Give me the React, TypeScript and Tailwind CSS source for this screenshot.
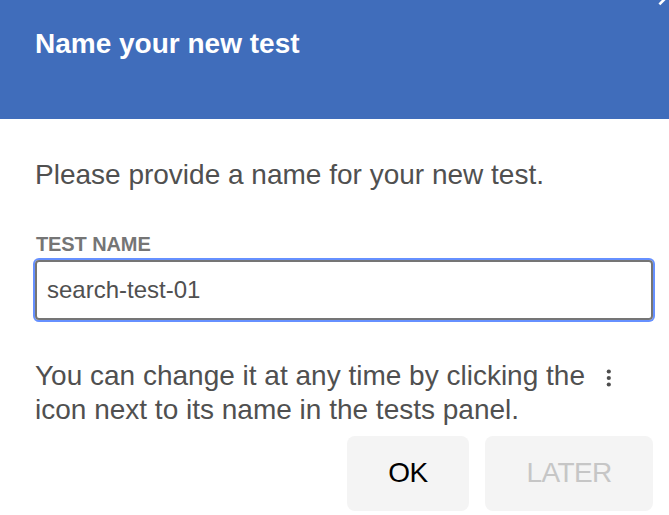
import React from 'react';

const MoreIcon = () => (
  <svg className="ml-[14px] inline-block h-[20px] w-[20px] align-[-3px]" viewBox="0 0 20 20" fill="#4d4d4d">
    <circle cx="9.8" cy="3.5" r="2.1" />
    <circle cx="9.8" cy="10" r="2.1" />
    <circle cx="9.8" cy="16.5" r="2.1" />
  </svg>
);

const App = () => {
  return (
    <div className="relative h-[515px] w-[669px] overflow-hidden bg-white font-['Liberation_Sans',Arial,sans-serif] text-[#505050]">
      <header className="h-[119px] bg-[#406dbb] px-[35px] pt-[27px]">
        <h1 className="text-[28px] leading-[34px] font-bold text-white">Name your new test</h1>
      </header>
      {/* Close icon, cut off by the corner of the dialog */}
      <svg className="absolute top-0 right-0 h-[6px] w-[12px]" viewBox="0 0 12 6" fill="none" stroke="#fff" strokeWidth="2.6">
        <path d="M2.4 4.3L8 -1.3" />
      </svg>

      <main className="pr-[16px] pl-[35px]">
        <p className="pt-[39px] text-[28px] leading-[34px]">Please provide a name for your new test.</p>
        <label
          className="mt-[41px] block pl-px text-[20px] leading-[22px] font-bold tracking-[-0.1px] text-[#757575]"
          htmlFor="test-name"
        >
          TEST NAME
        </label>
        <input
          id="test-name"
          className="mt-[5px] block h-[60px] w-full rounded-[4px] border-2 border-[#757575] px-[10px] text-[24px] ring-2 ring-[#6690ff] outline-none"
          defaultValue="search-test-01"
        />
        <p className="mt-[39px] text-[28px] leading-[34px] whitespace-nowrap">
          You can change it at any time by clicking the
          <MoreIcon />
          <br />
          icon next to its name in the tests panel.
        </p>
      </main>

      <footer className="mt-[9px] flex justify-end gap-4 pr-4">
        <button className="h-[75px] w-[122px] rounded-[8px] bg-[#f4f4f4] pb-[2px] text-[28px] tracking-[-0.6px] text-black">
          OK
        </button>
        <button
          className="h-[75px] w-[168px] rounded-[8px] bg-[#f4f4f4] pb-[2px] text-[28px] tracking-[-0.6px] text-[#c6c6c6]"
          disabled
        >
          LATER
        </button>
      </footer>
    </div>
  );
};

export default App;
